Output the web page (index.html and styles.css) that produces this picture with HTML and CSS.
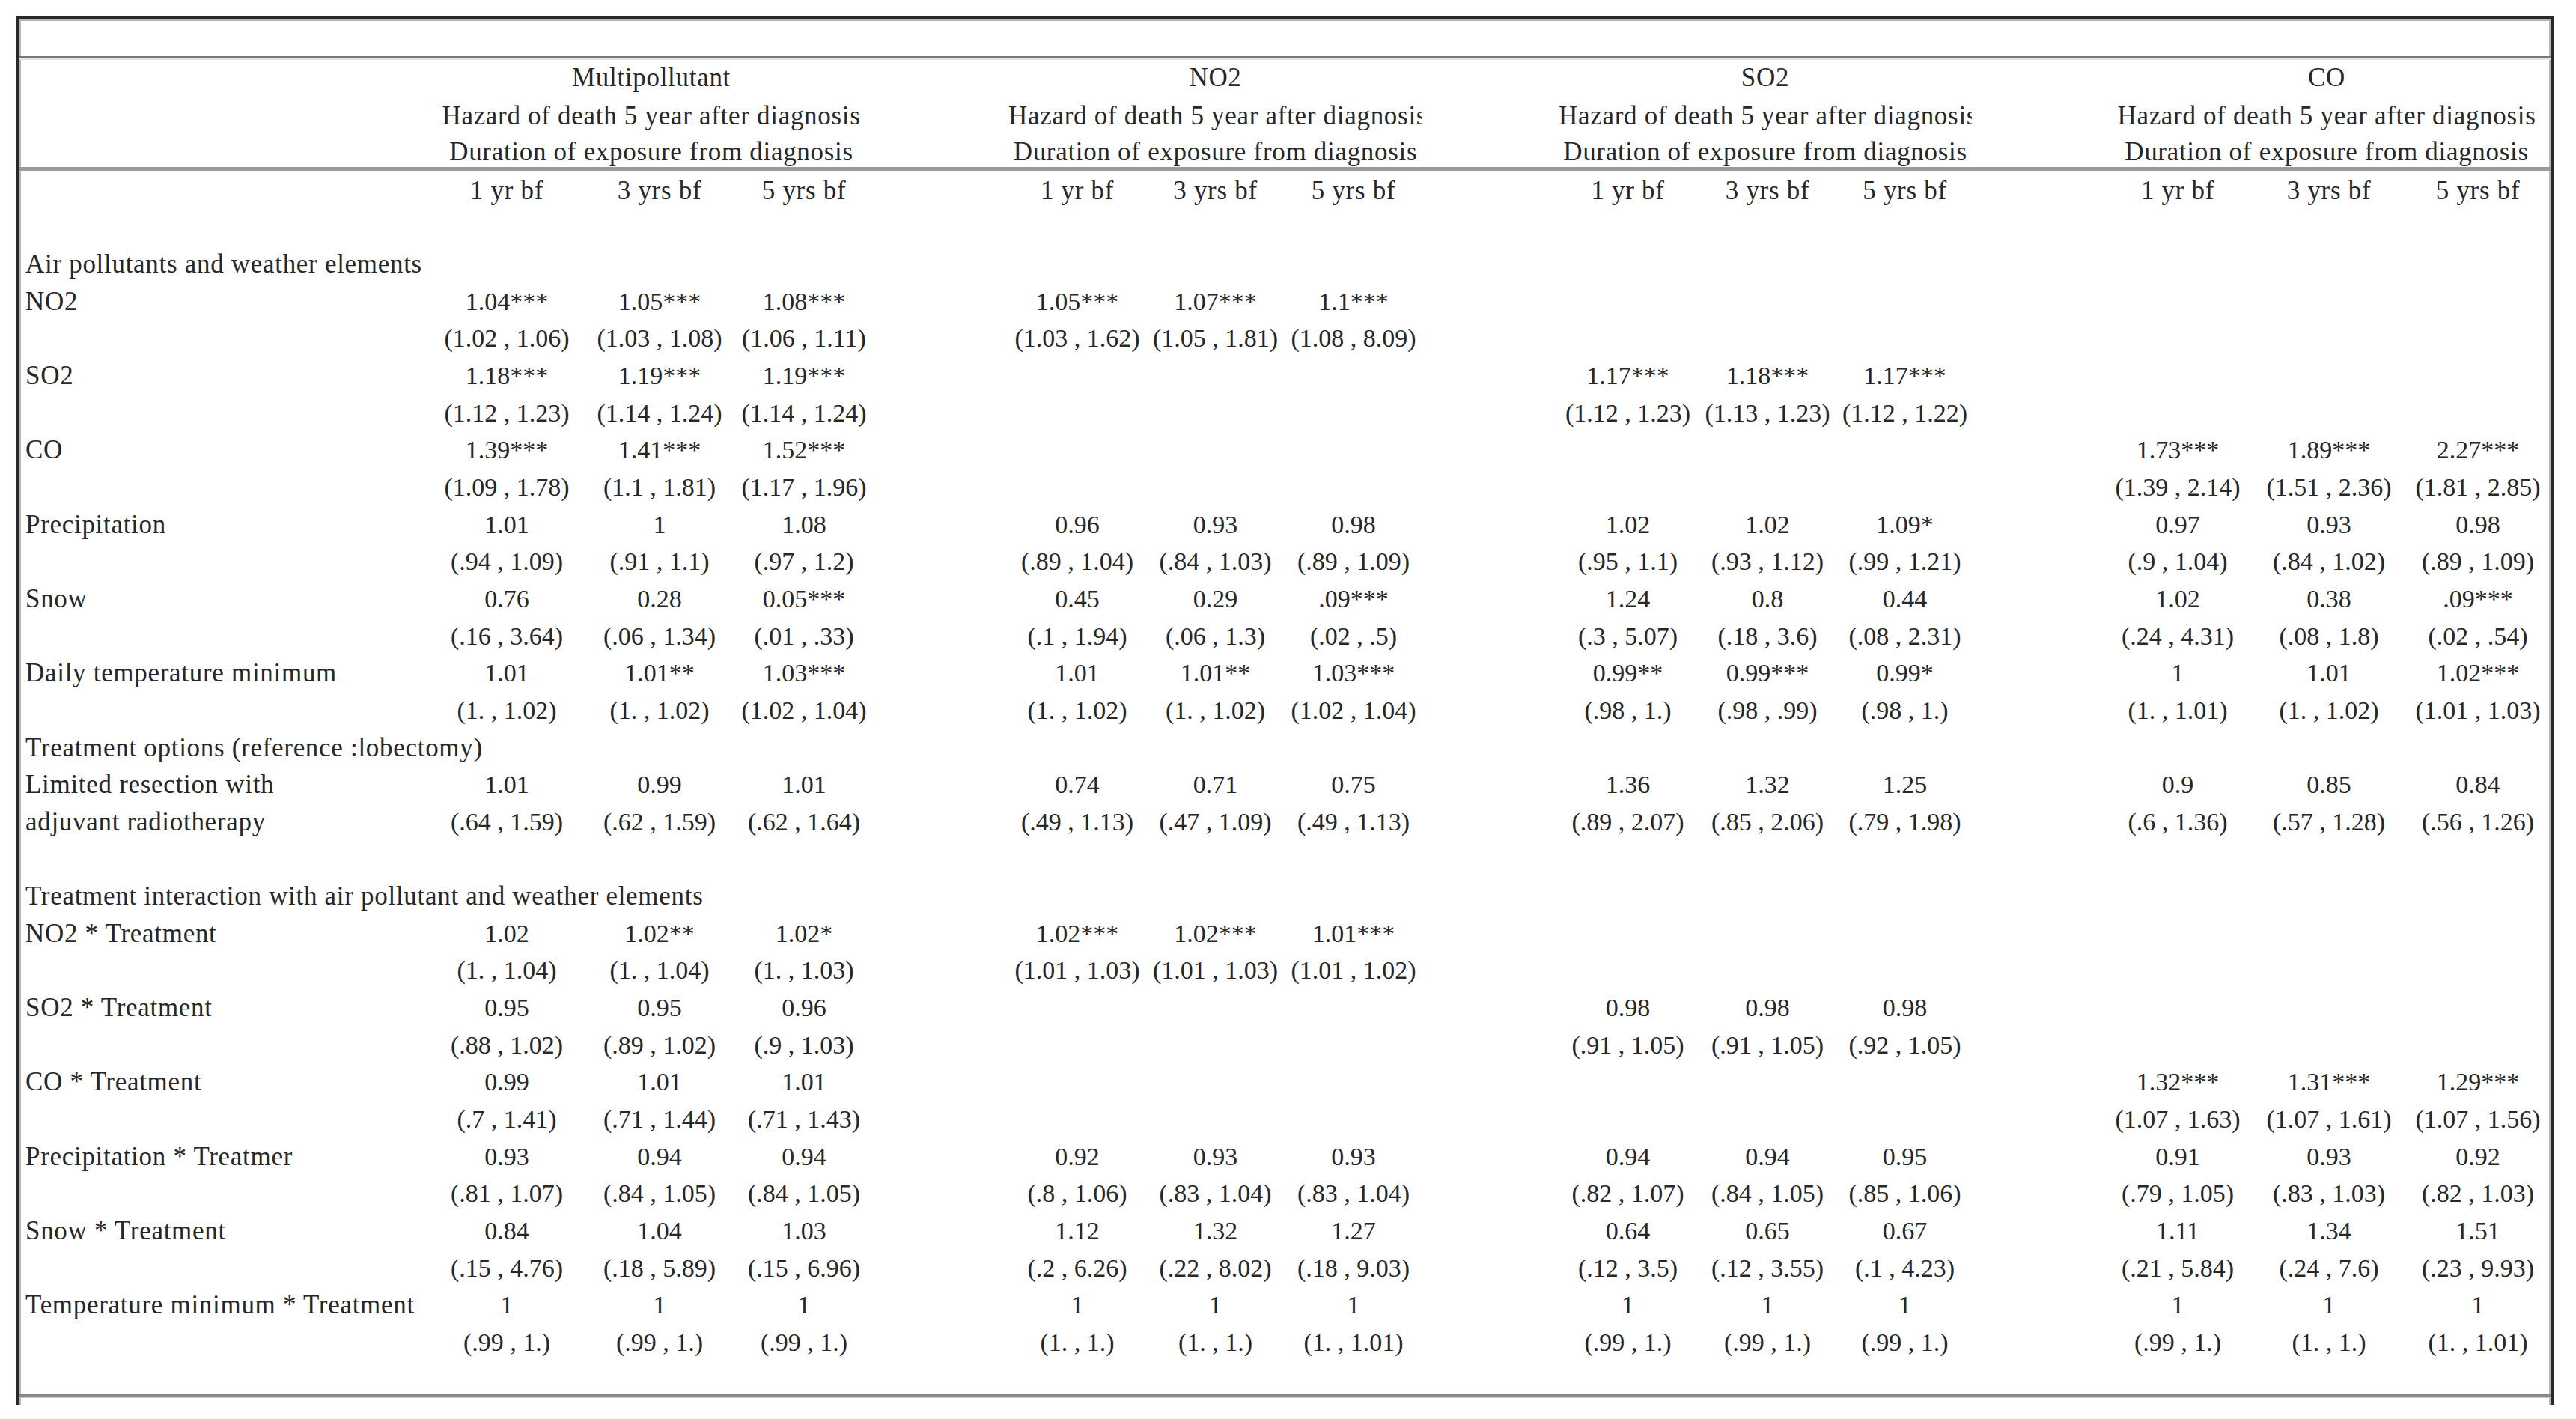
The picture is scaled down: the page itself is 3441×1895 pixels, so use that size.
FILE: index.html
```html
<!DOCTYPE html>
<html lang="en">
<head>
<meta charset="utf-8">
<title>Hazard of death table</title>
<link rel="stylesheet" href="styles.css">
</head>
<body>
<div class="frame">
<table class="grid">
<colgroup>
<col class="w-label">
<col class="w-m1"><col class="w-m2"><col class="w-m3">
<col class="w-sp1">
<col class="w-n1"><col class="w-n2"><col class="w-n3">
<col class="w-sp2">
<col class="w-s1"><col class="w-s2"><col class="w-s3">
<col class="w-sp3">
<col class="w-c1"><col class="w-c2"><col class="w-c3">
</colgroup>
<tbody>
<tr class="r-title"><td colspan="16"></td></tr>
<tr class="r-h1">
<td></td><td colspan="3" class="h"><div class="gh">Multipollutant</div></td><td></td>
<td colspan="3" class="h"><div class="gh">NO2</div></td><td></td>
<td colspan="3" class="h"><div class="gh">SO2</div></td><td></td>
<td colspan="3" class="h"><div class="gh">CO</div></td>
</tr>
<tr class="r-h2">
<td></td><td colspan="3" class="h"><div class="gh">Hazard of death 5 year after diagnosis</div></td><td></td>
<td colspan="3" class="h"><div class="gh">Hazard of death 5 year after diagnosis</div></td><td></td>
<td colspan="3" class="h"><div class="gh">Hazard of death 5 year after diagnosis</div></td><td></td>
<td colspan="3" class="h"><div class="gh">Hazard of death 5 year after diagnosis</div></td>
</tr>
<tr class="r-h3">
<td></td><td colspan="3" class="h"><div class="gh">Duration of exposure from diagnosis</div></td><td></td>
<td colspan="3" class="h"><div class="gh">Duration of exposure from diagnosis</div></td><td></td>
<td colspan="3" class="h"><div class="gh">Duration of exposure from diagnosis</div></td><td></td>
<td colspan="3" class="h"><div class="gh">Duration of exposure from diagnosis</div></td>
</tr>
<tr class="r-h4">
<td></td><td class="h">1 yr bf</td><td class="h">3 yrs bf</td><td class="h">5 yrs bf</td><td></td>
<td class="h">1 yr bf</td><td class="h">3 yrs bf</td><td class="h">5 yrs bf</td><td></td>
<td class="h">1 yr bf</td><td class="h">3 yrs bf</td><td class="h">5 yrs bf</td><td></td>
<td class="h">1 yr bf</td><td class="h">3 yrs bf</td><td class="h">5 yrs bf</td>
</tr>
<tr class="r-gap"><td colspan="16"></td></tr>

<tr class="r"><td colspan="16" class="l">Air pollutants and weather elements</td></tr>
<tr class="r"><td class="l">NO2</td><td>1.04***</td><td>1.05***</td><td>1.08***</td><td></td><td>1.05***</td><td>1.07***</td><td>1.1***</td><td></td><td></td><td></td><td></td><td></td><td></td><td></td><td></td></tr>
<tr class="r"><td class="l"></td><td>(1.02 , 1.06)</td><td>(1.03 , 1.08)</td><td>(1.06 , 1.11)</td><td></td><td>(1.03 , 1.62)</td><td>(1.05 , 1.81)</td><td>(1.08 , 8.09)</td><td></td><td></td><td></td><td></td><td></td><td></td><td></td><td></td></tr>
<tr class="r"><td class="l">SO2</td><td>1.18***</td><td>1.19***</td><td>1.19***</td><td></td><td></td><td></td><td></td><td></td><td>1.17***</td><td>1.18***</td><td>1.17***</td><td></td><td></td><td></td><td></td></tr>
<tr class="r"><td class="l"></td><td>(1.12 , 1.23)</td><td>(1.14 , 1.24)</td><td>(1.14 , 1.24)</td><td></td><td></td><td></td><td></td><td></td><td>(1.12 , 1.23)</td><td>(1.13 , 1.23)</td><td>(1.12 , 1.22)</td><td></td><td></td><td></td><td></td></tr>
<tr class="r"><td class="l">CO</td><td>1.39***</td><td>1.41***</td><td>1.52***</td><td></td><td></td><td></td><td></td><td></td><td></td><td></td><td></td><td></td><td>1.73***</td><td>1.89***</td><td>2.27***</td></tr>
<tr class="r"><td class="l"></td><td>(1.09 , 1.78)</td><td>(1.1 , 1.81)</td><td>(1.17 , 1.96)</td><td></td><td></td><td></td><td></td><td></td><td></td><td></td><td></td><td></td><td>(1.39 , 2.14)</td><td>(1.51 , 2.36)</td><td>(1.81 , 2.85)</td></tr>
<tr class="r"><td class="l">Precipitation</td><td>1.01</td><td>1</td><td>1.08</td><td></td><td>0.96</td><td>0.93</td><td>0.98</td><td></td><td>1.02</td><td>1.02</td><td>1.09*</td><td></td><td>0.97</td><td>0.93</td><td>0.98</td></tr>
<tr class="r"><td class="l"></td><td>(.94 , 1.09)</td><td>(.91 , 1.1)</td><td>(.97 , 1.2)</td><td></td><td>(.89 , 1.04)</td><td>(.84 , 1.03)</td><td>(.89 , 1.09)</td><td></td><td>(.95 , 1.1)</td><td>(.93 , 1.12)</td><td>(.99 , 1.21)</td><td></td><td>(.9 , 1.04)</td><td>(.84 , 1.02)</td><td>(.89 , 1.09)</td></tr>
<tr class="r"><td class="l">Snow</td><td>0.76</td><td>0.28</td><td>0.05***</td><td></td><td>0.45</td><td>0.29</td><td>.09***</td><td></td><td>1.24</td><td>0.8</td><td>0.44</td><td></td><td>1.02</td><td>0.38</td><td>.09***</td></tr>
<tr class="r"><td class="l"></td><td>(.16 , 3.64)</td><td>(.06 , 1.34)</td><td>(.01 , .33)</td><td></td><td>(.1 , 1.94)</td><td>(.06 , 1.3)</td><td>(.02 , .5)</td><td></td><td>(.3 , 5.07)</td><td>(.18 , 3.6)</td><td>(.08 , 2.31)</td><td></td><td>(.24 , 4.31)</td><td>(.08 , 1.8)</td><td>(.02 , .54)</td></tr>
<tr class="r"><td class="l">Daily temperature minimum</td><td>1.01</td><td>1.01**</td><td>1.03***</td><td></td><td>1.01</td><td>1.01**</td><td>1.03***</td><td></td><td>0.99**</td><td>0.99***</td><td>0.99*</td><td></td><td>1</td><td>1.01</td><td>1.02***</td></tr>
<tr class="r"><td class="l"></td><td>(1. , 1.02)</td><td>(1. , 1.02)</td><td>(1.02 , 1.04)</td><td></td><td>(1. , 1.02)</td><td>(1. , 1.02)</td><td>(1.02 , 1.04)</td><td></td><td>(.98 , 1.)</td><td>(.98 , .99)</td><td>(.98 , 1.)</td><td></td><td>(1. , 1.01)</td><td>(1. , 1.02)</td><td>(1.01 , 1.03)</td></tr>
<tr class="r"><td colspan="16" class="l">Treatment options (reference :lobectomy)</td></tr>
<tr class="r"><td class="l">Limited resection with</td><td>1.01</td><td>0.99</td><td>1.01</td><td></td><td>0.74</td><td>0.71</td><td>0.75</td><td></td><td>1.36</td><td>1.32</td><td>1.25</td><td></td><td>0.9</td><td>0.85</td><td>0.84</td></tr>
<tr class="r"><td class="l">adjuvant radiotherapy</td><td>(.64 , 1.59)</td><td>(.62 , 1.59)</td><td>(.62 , 1.64)</td><td></td><td>(.49 , 1.13)</td><td>(.47 , 1.09)</td><td>(.49 , 1.13)</td><td></td><td>(.89 , 2.07)</td><td>(.85 , 2.06)</td><td>(.79 , 1.98)</td><td></td><td>(.6 , 1.36)</td><td>(.57 , 1.28)</td><td>(.56 , 1.26)</td></tr>
<tr class="r"><td colspan="16"></td></tr>
<tr class="r"><td colspan="16" class="l">Treatment interaction with air pollutant and weather elements</td></tr>
<tr class="r"><td class="l">NO2 * Treatment</td><td>1.02</td><td>1.02**</td><td>1.02*</td><td></td><td>1.02***</td><td>1.02***</td><td>1.01***</td><td></td><td></td><td></td><td></td><td></td><td></td><td></td><td></td></tr>
<tr class="r"><td class="l"></td><td>(1. , 1.04)</td><td>(1. , 1.04)</td><td>(1. , 1.03)</td><td></td><td>(1.01 , 1.03)</td><td>(1.01 , 1.03)</td><td>(1.01 , 1.02)</td><td></td><td></td><td></td><td></td><td></td><td></td><td></td><td></td></tr>
<tr class="r"><td class="l">SO2 * Treatment</td><td>0.95</td><td>0.95</td><td>0.96</td><td></td><td></td><td></td><td></td><td></td><td>0.98</td><td>0.98</td><td>0.98</td><td></td><td></td><td></td><td></td></tr>
<tr class="r"><td class="l"></td><td>(.88 , 1.02)</td><td>(.89 , 1.02)</td><td>(.9 , 1.03)</td><td></td><td></td><td></td><td></td><td></td><td>(.91 , 1.05)</td><td>(.91 , 1.05)</td><td>(.92 , 1.05)</td><td></td><td></td><td></td><td></td></tr>
<tr class="r"><td class="l">CO * Treatment</td><td>0.99</td><td>1.01</td><td>1.01</td><td></td><td></td><td></td><td></td><td></td><td></td><td></td><td></td><td></td><td>1.32***</td><td>1.31***</td><td>1.29***</td></tr>
<tr class="r"><td class="l"></td><td>(.7 , 1.41)</td><td>(.71 , 1.44)</td><td>(.71 , 1.43)</td><td></td><td></td><td></td><td></td><td></td><td></td><td></td><td></td><td></td><td>(1.07 , 1.63)</td><td>(1.07 , 1.61)</td><td>(1.07 , 1.56)</td></tr>
<tr class="r"><td class="l">Precipitation * Treatmer</td><td>0.93</td><td>0.94</td><td>0.94</td><td></td><td>0.92</td><td>0.93</td><td>0.93</td><td></td><td>0.94</td><td>0.94</td><td>0.95</td><td></td><td>0.91</td><td>0.93</td><td>0.92</td></tr>
<tr class="r"><td class="l"></td><td>(.81 , 1.07)</td><td>(.84 , 1.05)</td><td>(.84 , 1.05)</td><td></td><td>(.8 , 1.06)</td><td>(.83 , 1.04)</td><td>(.83 , 1.04)</td><td></td><td>(.82 , 1.07)</td><td>(.84 , 1.05)</td><td>(.85 , 1.06)</td><td></td><td>(.79 , 1.05)</td><td>(.83 , 1.03)</td><td>(.82 , 1.03)</td></tr>
<tr class="r"><td class="l">Snow * Treatment</td><td>0.84</td><td>1.04</td><td>1.03</td><td></td><td>1.12</td><td>1.32</td><td>1.27</td><td></td><td>0.64</td><td>0.65</td><td>0.67</td><td></td><td>1.11</td><td>1.34</td><td>1.51</td></tr>
<tr class="r"><td class="l"></td><td>(.15 , 4.76)</td><td>(.18 , 5.89)</td><td>(.15 , 6.96)</td><td></td><td>(.2 , 6.26)</td><td>(.22 , 8.02)</td><td>(.18 , 9.03)</td><td></td><td>(.12 , 3.5)</td><td>(.12 , 3.55)</td><td>(.1 , 4.23)</td><td></td><td>(.21 , 5.84)</td><td>(.24 , 7.6)</td><td>(.23 , 9.93)</td></tr>
<tr class="r"><td class="l">Temperature minimum * Treatment</td><td>1</td><td>1</td><td>1</td><td></td><td>1</td><td>1</td><td>1</td><td></td><td>1</td><td>1</td><td>1</td><td></td><td>1</td><td>1</td><td>1</td></tr>
<tr class="r"><td class="l"></td><td>(.99 , 1.)</td><td>(.99 , 1.)</td><td>(.99 , 1.)</td><td></td><td>(1. , 1.)</td><td>(1. , 1.)</td><td>(1. , 1.01)</td><td></td><td>(.99 , 1.)</td><td>(.99 , 1.)</td><td>(.99 , 1.)</td><td></td><td>(.99 , 1.)</td><td>(1. , 1.)</td><td>(1. , 1.01)</td></tr>
<tr class="r-end"><td colspan="16"></td></tr>
</tbody>
</table>
</div>
</body>
</html>
```

FILE: styles.css
```css
html, body {
  margin: 0;
  padding: 0;
  background: #ffffff;
}

body {
  font-family: "Liberation Serif", "Times New Roman", serif;
  color: #272727;
}

.frame {
  margin: 22px 0 0 21px;
  width: 3383px;
  border: 4px solid #282828;
  border-top-width: 3px;
  border-bottom: 0;
  padding-bottom: 11px;
  background: #ffffff;
  box-shadow: inset 3px 3px 0 #b6b6b6, inset -3px 0 0 #b6b6b6;
}

.grid {
  width: 3383px;
  table-layout: fixed;
  border-collapse: separate;
  border-spacing: 0;
}

.w-label { width: 547px; }
.w-m1 { width: 210px; }
.w-m2 { width: 198px; }
.w-m3 { width: 188px; }
.w-sp1 { width: 179px; }
.w-n1 { width: 184px; }
.w-n2 { width: 185px; }
.w-n3 { width: 184px; }
.w-sp2 { width: 182px; }
.w-s1 { width: 185px; }
.w-s2 { width: 188px; }
.w-s3 { width: 179px; }
.w-sp3 { width: 174px; }
.w-c1 { width: 202px; }
.w-c2 { width: 202px; }
.w-c3 { width: 196px; }

.grid td {
  padding: 0;
  white-space: nowrap;
  text-align: center;
  vertical-align: top;
  font-size: 34px;
  line-height: 40px;
  letter-spacing: 0;
}

.grid td.l,
.grid td.h {
  font-size: 35px;
  letter-spacing: 0.7px;
}

.grid td.l {
  text-align: left;
  padding-left: 9px;
}

.gh {
  overflow: hidden;
  white-space: nowrap;
  text-align: center;
}

.r-title { height: 53px; }
.r-title td {
  border-bottom: 3px solid #787878;
  box-shadow: 0 2px 0 #e4e4e4;
}

.r-h1 { height: 52px; }
.r-h1 td { padding-top: 6px; }

.r-h2 { height: 50px; }
.r-h2 td { padding-top: 5px; }

.r-h3 { height: 49px; }
.r-h3 td {
  padding-top: 3px;
  border-bottom: 6px solid #9a9a9a;
}

.r-h4 { height: 50px; }
.r-h4 td { padding-top: 6px; }

.r-gap { height: 49.17px; }

.r { height: 49.66px; }
.r td { padding-top: 4.83px; }

.r-end { height: 47px; }
.r-end td {
  border-bottom: 3px solid #8a8a8a;
  box-shadow: 0 2px 0 #c8c8c8;
}
```
